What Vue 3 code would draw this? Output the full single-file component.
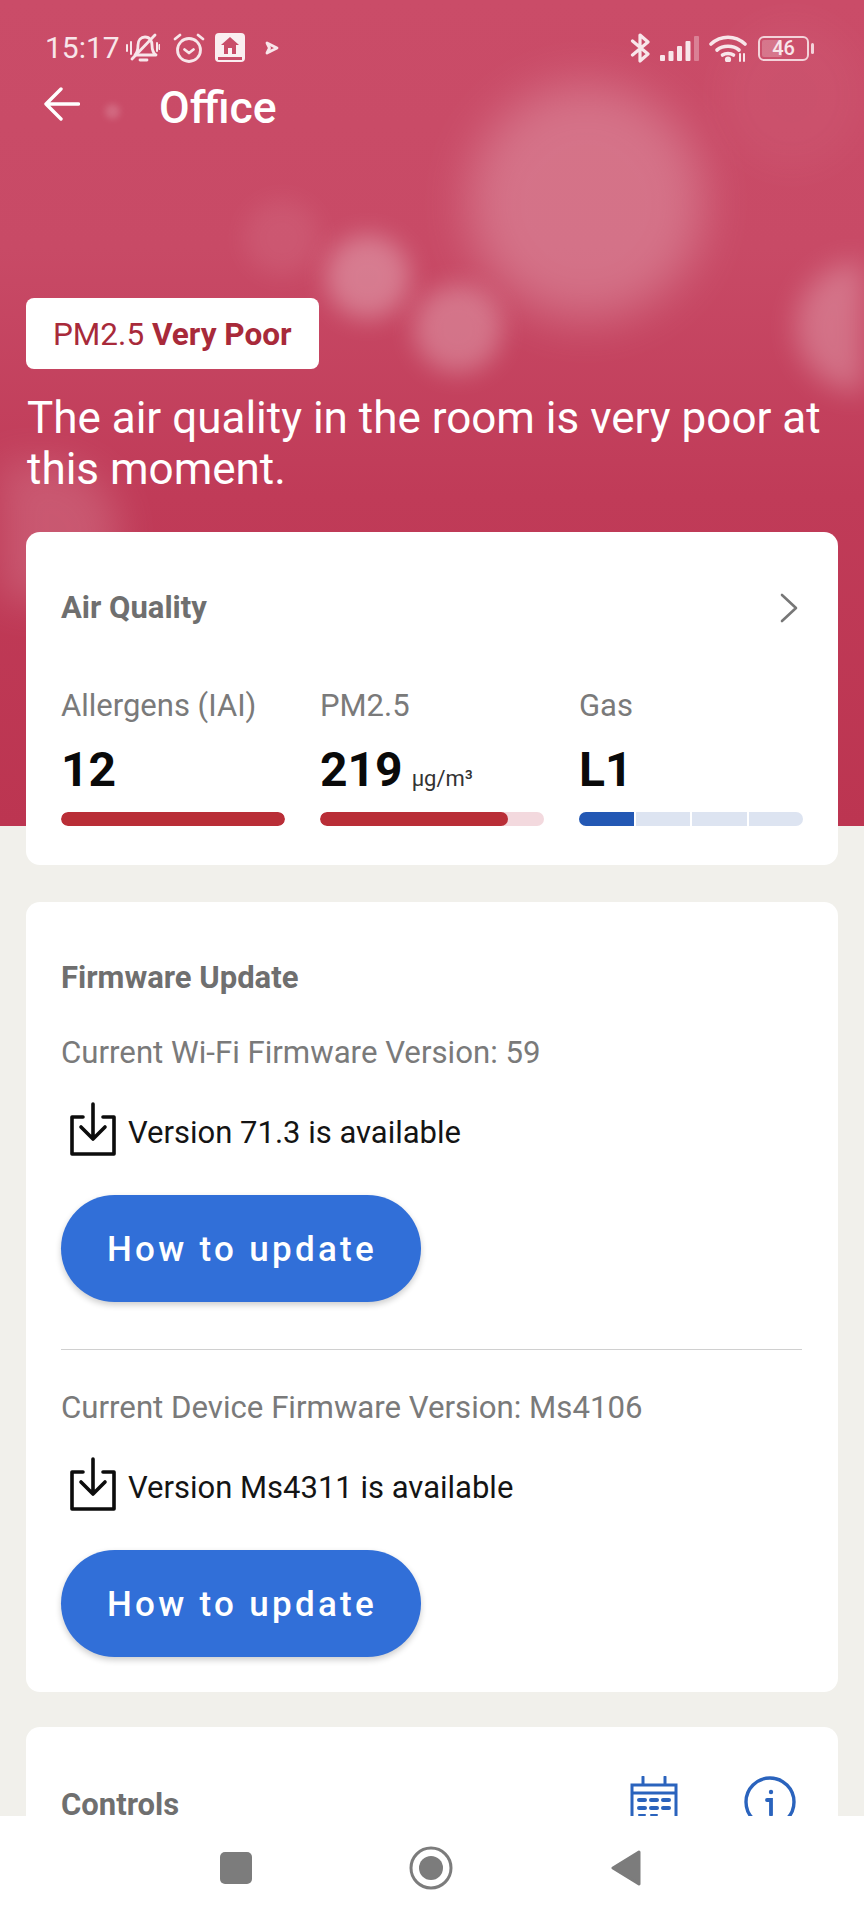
<script setup>
const metrics = [
  { label: 'Allergens (IAI)', value: '12', unit: '', fill: 100, kind: 'red' },
  { label: 'PM2.5', value: '219', unit: 'µg/m³', fill: 84, kind: 'red' },
  { label: 'Gas', value: 'L1', unit: '', kind: 'seg' },
]
const updates = [
  { current: 'Current Wi-Fi Firmware Version: 59', available: 'Version 71.3 is available' },
  { current: 'Current Device Firmware Version: Ms4106', available: 'Version Ms4311 is available' },
]
</script>

<template>
  <div class="phone">
    <div class="scroll">
      <section class="hero">
        <i class="bokeh b1"></i><i class="bokeh b2"></i><i class="bokeh b3"></i><i class="bokeh b4"></i>
        <i class="bokeh b5"></i><i class="bokeh b6"></i><i class="bokeh b7"></i><i class="bokeh b8"></i>

        <div class="status">
          <div class="status-side">
            <span class="time">15:17</span>
            <svg class="st-bell" viewBox="0 0 34 30" fill="none" stroke="#f8e6ea" stroke-width="2.8" stroke-linecap="round" stroke-linejoin="round">
              <path d="M9 22c2-2 3-5 3-10 0-5 3-8 7-8 5 0 7 4 7 8 0 5 1 8 4 10z" />
              <path d="M14 27h7" />
              <path d="M6 26 29 2" />
              <path d="M1 12v6M5 9v12M31 10v8M33.500 12v4" stroke-width="2" />
            </svg>
            <svg class="st-alarm" viewBox="0 0 32 32" fill="none" stroke="#f8e6ea" stroke-width="2.8" stroke-linecap="round" stroke-linejoin="round">
              <circle cx="16" cy="18" r="11.500" />
              <path d="M11.500 17.500 16 21l4.500-3.500" />
              <path d="M2 7l5-4M30 7l-5-4" />
            </svg>
            <svg class="st-home" viewBox="0 0 30 30">
              <rect x="0" y="0" width="30" height="29" rx="4" fill="#faeef1" />
              <path d="M15 4 6 12h3v9h4v-6h4v6h4v-9h3z" fill="#c94c69" />
              <rect x="3" y="24" width="24" height="3" fill="#c94c69" />
            </svg>
            <svg class="st-play" viewBox="0 0 14 14" fill="none" stroke="#f8e6ea" stroke-width="2.800" stroke-linejoin="round">
              <path d="M2 2 12 7 2 12 4.500 7z" />
            </svg>
          </div>
          <div class="status-side right">
            <svg class="st-bt" viewBox="0 0 21 30" fill="none" stroke="#f8e6ea" stroke-width="3.200" stroke-linejoin="round" stroke-linecap="round">
              <path d="M2.500 8 18 21 10 28V2l8 7L2.500 22" />
            </svg>
            <svg class="st-signal" viewBox="0 0 39 25" fill="#f8e6ea">
              <rect x="0" y="19" width="5" height="6" rx="1" />
              <rect x="8.500" y="15" width="5" height="10" rx="1" />
              <rect x="17" y="10" width="5" height="15" rx="1" />
              <rect x="25.500" y="5" width="5" height="20" rx="1" />
              <rect x="34" y="0" width="5" height="25" rx="1" opacity=".35" />
            </svg>
            <svg class="st-wifi" viewBox="0 0 38 27" fill="none" stroke="#f8e6ea" stroke-width="3.600" stroke-linecap="round">
              <path d="M2 9C12 0 26 0 36 9" />
              <path d="M8 15c6-5 16-5 22 0" />
              <path d="M13.500 20c3-2 8-2 11 0" />
              <circle cx="19" cy="24.500" r="1.300" fill="#f8e6ea" />
              <path d="M31 19v7M35 19v7" stroke-width="2" />
            </svg>
            <div class="battery">
              <span class="bat-level"></span>
              <span class="bat-num">46</span>
            </div>
          </div>
        </div>

        <header class="topbar">
          <svg class="back" viewBox="0 0 36 34" fill="none" stroke="#fff" stroke-width="3.400" stroke-linecap="round" stroke-linejoin="round">
            <path d="M34.500 17H2M17 2 2 17l15 15" />
          </svg>
          <h1>Office</h1>
        </header>

        <div class="pill">PM2.5 <b>Very Poor</b></div>
        <p class="headline">The air quality in the room is very poor at this moment.</p>

        <article class="card air">
          <div class="card-head">
            <h2>Air Quality</h2>
            <svg class="chev" viewBox="0 0 20 30" fill="none" stroke="#777" stroke-width="2.600" stroke-linecap="round" stroke-linejoin="round">
              <path d="M3 2l14 13L3 28" />
            </svg>
          </div>
          <div class="metrics">
            <div v-for="m in metrics" :key="m.label" class="metric">
              <div class="m-label">{{ m.label }}</div>
              <div class="m-value">{{ m.value }}<small v-if="m.unit">{{ m.unit }}</small></div>
              <div v-if="m.kind === 'red'" class="bar">
                <span class="bar-fill" :style="{ width: m.fill + '%' }"></span>
              </div>
              <div v-else class="bar seg">
                <span class="on"></span><span></span><span></span><span></span>
              </div>
            </div>
          </div>
        </article>
      </section>

      <article class="card firmware">
        <h2>Firmware Update</h2>
        <template v-for="(u, i) in updates" :key="u.current">
          <hr v-if="i" />
          <div class="current">{{ u.current }}</div>
          <div class="avail">
            <svg class="dl" viewBox="0 0 46 54" fill="none" stroke="#0c0c0c" stroke-width="3.600" stroke-linecap="round" stroke-linejoin="round">
              <path d="M13 15H2v37h42V15H33" />
              <path d="M23 2v34M11 25l12 12 12-12" />
            </svg>
            <span>{{ u.available }}</span>
          </div>
          <button class="cta">How to update</button>
        </template>
      </article>

      <article class="card controls">
        <h2>Controls</h2>
        <div class="ctl-icons">
          <svg class="cal" viewBox="0 0 48 48" fill="none" stroke="#2a63bd" stroke-width="3" stroke-linecap="round">
            <path d="M2 46V9h44v37M2 17h44M13 1v8M35 1v8" />
            <path d="M9 24h6M21 24h6M33 24h6M9 32h6M21 32h6M33 32h6" stroke-width="4" />
            <path d="M9 39h6M21 39h6" stroke-width="2" />
          </svg>
          <svg class="info" viewBox="0 0 52 52" fill="none" stroke="#2a63bd" stroke-width="3.400" stroke-linecap="round">
            <circle cx="26" cy="26" r="24" />
            <circle cx="27" cy="16" r="2.200" fill="#2a63bd" stroke="none" />
            <path d="M23 24h4v15" stroke-width="3.800" />
          </svg>
        </div>
      </article>
    </div>

    <nav class="navbar">
      <span class="nav-square"></span>
      <svg class="nav-circle" viewBox="0 0 44 44" fill="none">
        <circle cx="22" cy="22" r="20" stroke="#7c7c7c" stroke-width="3" />
        <circle cx="22" cy="22" r="12" fill="#7c7c7c" />
      </svg>
      <svg class="nav-tri" viewBox="0 0 30 36">
        <path d="M28 2 2 18l26 16z" fill="#7c7c7c" stroke="#7c7c7c" stroke-width="3" stroke-linejoin="round" />
      </svg>
    </nav>
  </div>
</template>

<style>
html, body { margin: 0; background: #f1f0eb; }
</style>

<style scoped>
.phone {
  width: 864px;
  height: 1920px;
  display: flex;
  flex-direction: column;
  overflow: hidden;
  background: #f1f0eb;
  font-family: Roboto, "Liberation Sans", sans-serif;
}
.scroll { flex: 1; min-height: 0; }
.hero {
  position: relative;
  height: 826px;
  box-sizing: border-box;
  padding: 30px 26px 0;
  overflow: hidden;
  background: linear-gradient(180deg, #ca4c68 0%, #c84a66 30%, #c03b58 60%, #bc3551 100%);
  overflow: visible;
  clip-path: inset(0 0 -60px 0);
}
.bokeh { position: absolute; border-radius: 50%; background: #fff; filter: blur(12px); pointer-events: none; }
.b1 { left: 468px; top: 84px; width: 236px; height: 236px; opacity: .22; filter: blur(24px); }
.b2 { left: 326px; top: 235px; width: 84px; height: 84px; opacity: .28; }
.b3 { left: 414px; top: 285px; width: 88px; height: 88px; opacity: .25; }
.b4 { left: 244px; top: 200px; width: 76px; height: 76px; opacity: .07; }
.b5 { left: 796px; top: 262px; width: 68px; height: 130px; border-radius: 65px 0 0 65px; opacity: .24; filter: blur(14px); }
.b6 { left: 0; top: 462px; width: 120px; height: 140px; border-radius: 0 70px 70px 0; opacity: .15; filter: blur(20px); }
.b7 { left: 105px; top: 104px; width: 15px; height: 15px; opacity: .16; filter: blur(3px); }
.b8 { left: 720px; top: 20px; width: 144px; height: 150px; opacity: .03; filter: blur(18px); }

.status {
  position: relative;
  height: 36px;
  margin: 0 23px 0 19px;
  display: flex;
  align-items: center;
  justify-content: space-between;
}
.status-side { display: flex; align-items: center; }
.right { margin-right: 6px; }
.time { font-size: 30px; color: #f8e6ea; line-height: 36px; width: 81px; }
.st-bell { width: 34px; height: 30px; }
.st-alarm { width: 32px; height: 32px; margin-left: 13px; }
.st-home { width: 30px; height: 30px; margin-left: 10px; }
.st-play { width: 14px; height: 14px; margin-left: 20px; }
.st-bt { width: 21px; height: 30px; }
.st-signal { width: 39px; height: 25px; margin-left: 9px; }
.st-wifi { width: 38px; height: 27px; margin-left: 10px; }
.battery {
  position: relative;
  width: 51px;
  height: 25px;
  margin-left: 11px;
  box-sizing: border-box;
  border: 2px solid #f3d3da;
  border-radius: 6px;
  display: flex;
  align-items: center;
  justify-content: center;
}
.battery::after {
  content: "";
  position: absolute;
  right: -7px;
  top: 5px;
  width: 3px;
  height: 11px;
  border-radius: 2px;
  background: #f3d3da;
}
.bat-level { position: absolute; left: 2px; top: 2px; bottom: 2px; width: 20px; border-radius: 2px; background: rgba(255,255,255,.22); }
.bat-num { position: relative; font-size: 20px; font-weight: 500; color: #f8e6ea; line-height: 1; }

.topbar {
  position: relative;
  height: 48px;
  margin: 16px 0 0 18px;
  display: flex;
  align-items: center;
}
.back { width: 36px; height: 34px; margin-top: -4px; }
h1 { margin: 4px 0 0 79px; font-size: 44.500px; font-weight: 500; color: #fff; line-height: 48px; }

.pill {
  position: relative;
  width: 293px;
  height: 71px;
  margin-top: 168px;
  box-sizing: border-box;
  padding-left: 27px;
  border-radius: 8px;
  background: #fff;
  color: #a82a3a;
  font-size: 31.500px;
  line-height: 73px;
  white-space: nowrap;
}
.pill b { font-weight: 700; }
.headline {
  position: relative;
  margin: 24px 0 0 1px;
  font-size: 44px;
  line-height: 51px;
  color: #fff;
  width: 805px;
}

.card { background: #fff; border-radius: 14px; box-sizing: border-box; }
h2 { margin: 0; font-size: 31px; font-weight: 700; color: #6f6f6f; line-height: 36px; }

.air {
  position: absolute;
  left: 26px;
  top: 532px;
  width: 812px;
  height: 333px;
  padding: 0 35px;
}
.card-head { display: flex; justify-content: space-between; align-items: center; height: 152px; padding-right: 4px; }
.chev { width: 20px; height: 30px; }
.metrics { display: grid; grid-template-columns: repeat(3, 224px); column-gap: 35px; margin-top: 0; }
.metric { min-width: 0; }
.m-label { font-size: 31px; line-height: 44px; height: 44px; color: #7a7a7a; white-space: nowrap; }
.m-value { font-size: 48px; font-weight: 700; line-height: 60px; height: 60px; color: #0a0a0a; margin-top: 12px; white-space: nowrap; }
.m-value small { font-size: 22px; font-weight: 400; line-height: 0; margin-left: 9px; color: #333; }
.bar { height: 14px; margin-top: 12px; border-radius: 7px; background: #f3d9de; overflow: hidden; }
.bar-fill { display: block; height: 100%; border-radius: 7px; background: #b92e37; }
.bar.seg { display: grid; grid-template-columns: repeat(4, 1fr); column-gap: 2px; background: transparent; }
.bar.seg span { background: #dde4f1; }
.bar.seg .on { background: #2358b4; }

.firmware {
  margin: 76px 26px 0;
  height: 790px;
  padding: 58px 36px 0 35px;
}
.current { font-size: 31.200px; line-height: 40px; color: #7a7a7a; margin-top: 37px; white-space: nowrap; }
hr + .current { margin-top: 38px; }
.avail { display: flex; align-items: center; height: 54px; margin: 29px 0 0 9px; }
.dl { width: 46px; height: 54px; flex: none; }
.avail span { margin-left: 12px; font-size: 31px; line-height: 54px; color: #141414; white-space: nowrap; margin-top: 8px; }
.cta {
  display: block;
  width: 360px;
  height: 107px;
  margin-top: 39px;
  border: 0;
  padding: 2px 0 0 2px;
  border-radius: 54px;
  background: #316fd8;
  color: #fff;
  font-family: inherit;
  font-size: 35px;
  font-weight: 500;
  letter-spacing: 3.300px;
  box-shadow: 0 3px 6px rgba(0,0,0,.2);
}
hr { border: 0; height: 1px; background: #d0d0d0; margin: 47px 0 0; }

.controls {
  margin: 35px 26px 0;
  height: 200px;
  padding: 65px 36px 0 35px;
  display: flex;
  justify-content: space-between;
  align-items: flex-start;
}
.controls h2 { line-height: 26px; }
.ctl-icons { display: flex; margin-top: -16px; margin-right: 6px; }
.cal { width: 48px; height: 48px; }
.info { width: 52px; height: 52px; margin-left: 66px; }

.navbar {
  flex: none;
  position: relative;
  z-index: 1;
  height: 104px;
  background: #fff;
  display: flex;
  align-items: center;
  box-sizing: border-box;
  padding: 0 0 0 220px;
}
.nav-square { width: 32px; height: 32px; border-radius: 5px; background: #7c7c7c; }
.nav-circle { width: 44px; height: 44px; margin-left: 157px; }
.nav-tri { width: 30px; height: 36px; margin-left: 158px; }
</style>
